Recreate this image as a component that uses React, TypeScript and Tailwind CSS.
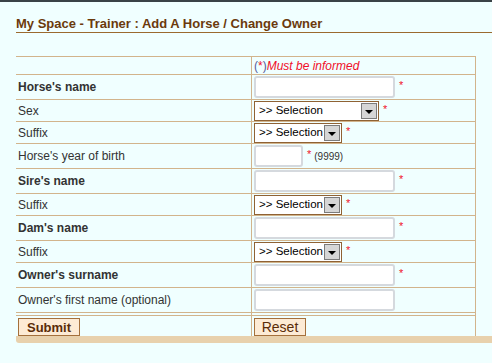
const rows: { label: string; bold?: boolean; kind: 'input' | 'select' | 'wide' | 'year' | 'plain'; required?: boolean; h: string }[] = [
  { label: "Horse's name", bold: true, kind: 'input', required: true, h: 'h-[25px]' },
  { label: 'Sex', kind: 'wide', required: true, h: 'h-[22px]' },
  { label: 'Suffix', kind: 'select', required: true, h: 'h-[22px]' },
  { label: "Horse's year of birth", kind: 'year', h: 'h-[25px]' },
  { label: "Sire's name", bold: true, kind: 'input', required: true, h: 'h-[25px]' },
  { label: 'Suffix', kind: 'select', required: true, h: 'h-[22px]' },
  { label: "Dam's name", bold: true, kind: 'input', required: true, h: 'h-[25px]' },
  { label: 'Suffix', kind: 'select', required: true, h: 'h-[22px]' },
  { label: "Owner's surname", bold: true, kind: 'input', required: true, h: 'h-[25px]' },
  { label: "Owner's first name (optional)", kind: 'plain', h: 'h-[25px]' },
];

const Star = () => <span className="mb-[3px] ml-[4px] text-[11px] leading-none text-[#f0102a]">*</span>;

const FakeSelect = ({ wide }: { wide?: boolean }) => (
  <div
    className={`flex h-[20px] items-center border border-[#8f6234] bg-white ${wide ? 'w-[125px]' : 'w-[88px]'}`}
  >
    <span className="min-w-0 flex-1 overflow-hidden whitespace-nowrap pl-[4px] text-[11.5px] leading-none text-black">
      &gt;&gt; Selection
    </span>
    <span className="mr-[1px] flex h-[16px] w-[16px] shrink-0 items-center justify-center border border-[#7b7b7b] bg-[#d6d6d6]">
      <span className="mt-[2px] h-0 w-0 border-x-[4px] border-t-[4px] border-x-transparent border-t-black" />
    </span>
  </div>
);

const TextBox = ({ w }: { w: string }) => (
  <div className={`h-[22px] ${w} rounded-[3px] border-2 border-[#d5d9de] bg-white`} />
);

export default function App() {
  return (
    <div className="min-h-[363px] bg-[#f0ffff] font-['Liberation_Sans',Arial,sans-serif] text-[12px] text-[#333]">
      <div className="h-[2px] bg-[#3a4347]" />

      <div className="ml-4 mt-[14px] h-[17px] border-b border-[#9b6a2f] text-[13px] font-bold leading-[16px] text-[#6b3a0c]">
        My Space - Trainer : Add A Horse / Change Owner
      </div>

      <div className="ml-4 mt-[23px] w-[460px] border-t border-[#d2b48c]">
        <div className="flex h-[18px] border-b border-[#d2b48c]">
          <div className="w-[236px] border-r border-[#d2b48c]" />
          <div className="flex w-[224px] items-center border-r border-[#d2b48c] pl-[2px]">
            <span className="text-[#555a9a]">(</span>
            <span className="text-[#f0102a]">*</span>
            <span className="text-[#555a9a]">)</span>
            <span className="italic text-[#f0102a]">Must be informed</span>
          </div>
        </div>

        {rows.map((r, i) => (
          <div key={i} className={`flex ${r.h} border-b border-[#d2b48c]`}>
            <div
              className={`flex w-[236px] items-center border-r border-[#d2b48c] pl-[2px] ${r.bold ? 'font-bold' : ''}`}
            >
              {r.label}
            </div>
            <div className="flex w-[224px] items-center border-r border-[#d2b48c] pl-[2px]">
              {(r.kind === 'input' || r.kind === 'plain') && <TextBox w="w-[141px]" />}
              {r.kind === 'wide' && <FakeSelect wide />}
              {r.kind === 'select' && <FakeSelect />}
              {r.kind === 'year' && (
                <>
                  <TextBox w="w-[49px]" />
                  <Star />
                  <span className="ml-[3px] text-[10px] text-[#333]">(9999)</span>
                </>
              )}
              {r.required && r.kind !== 'year' && <Star />}
            </div>
          </div>
        ))}

        <div className="flex h-[3px] border-b border-[#d2b48c]">
          <div className="w-[236px] border-r border-[#d2b48c]" />
          <div className="w-[224px] border-r border-[#d2b48c]" />
        </div>

        <div className="flex h-[20px]">
          <div className="w-[236px] border-r border-[#d2b48c] pl-[2px] pt-[2px]">
            <button className="flex h-[18px] w-[62px] items-center justify-center border border-[#a4703c] bg-[#fdebd5] text-[13px] font-bold leading-none text-[#5a2c08]">
              Submit
            </button>
          </div>
          <div className="w-[224px] border-r border-[#d2b48c] pl-[2px] pt-[2px]">
            <button className="flex h-[18px] w-[52px] items-center justify-center border border-[#a4703c] bg-[#fdebd5] text-[14px] leading-none text-[#5a2c08]">
              Reset
            </button>
          </div>
        </div>
      </div>

      <div className="ml-4 h-[7px] rounded-bl-[3px] bg-[#e8d1ad]" />
    </div>
  );
}
